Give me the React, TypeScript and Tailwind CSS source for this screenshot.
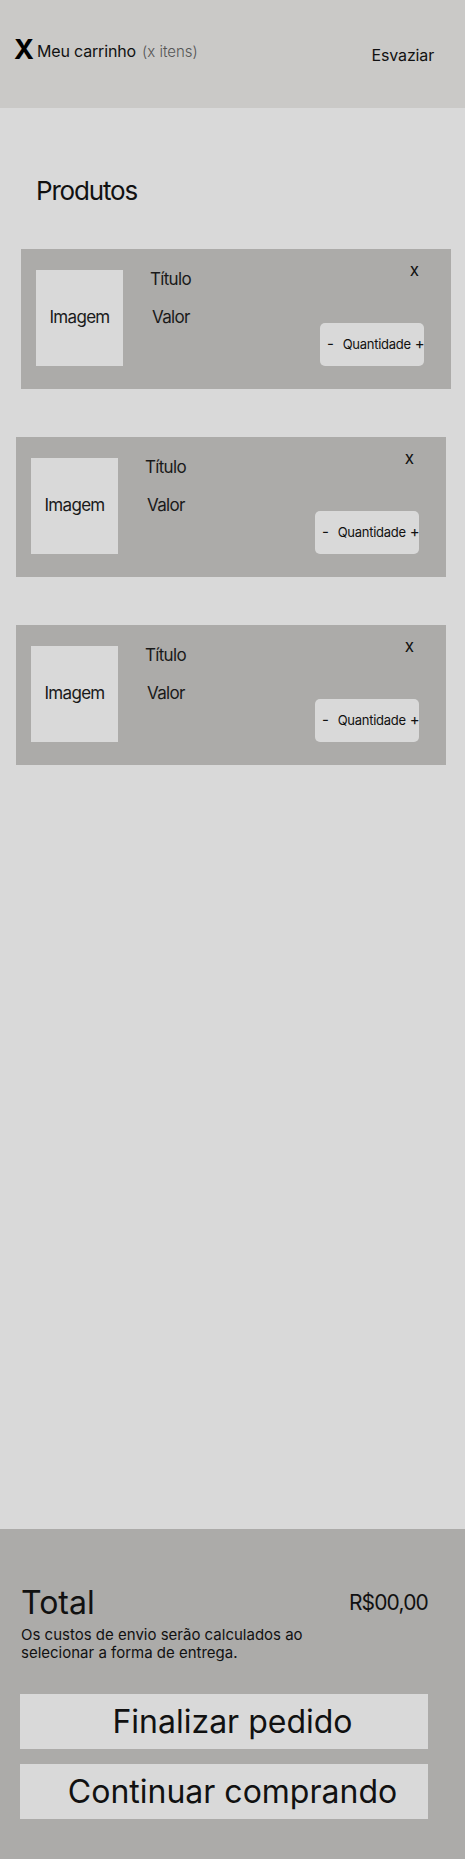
import React from "react";

const font = { fontFamily: "Inter, 'Noto Sans', sans-serif" };

function CartItem({ shift }: { shift: string }) {
  return (
    <div className={`${shift} w-[430px] h-[140px] bg-[#acaba9] flex pl-[15px] pt-[21px] pr-[27px]`}>
      {/* Image placeholder */}
      <div className="w-[87px] h-[96px] bg-[#d9d9d9] flex items-center justify-center text-[17px] tracking-[-0.04em] text-[#1a1a1a]">
        Imagem
      </div>

      {/* Title & price */}
      <div className="ml-[27px] -mt-[2px] flex flex-col text-[17px] tracking-[-0.04em] leading-[22px] text-[#1a1a1a]">
        <span>Título</span>
        <span className="mt-[16px] ml-[2px]">Valor</span>
      </div>

      {/* Remove + quantity */}
      <div className="ml-auto -mt-[11px] flex flex-col items-end">
        <span className="mr-[5px] text-[17px] leading-[22px] text-[#111]">x</span>
        <div className="mt-[42px] w-[104px] h-[43px] rounded-[5px] bg-[#d9d9d9] flex items-center pl-[7px] text-[13px] tracking-[-0.02em] text-[#111]">
          <span className="text-[15px]">-</span>
          <span className="ml-[9px]">Quantidade</span>
          <span className="ml-[4px] text-[15px] tracking-normal">+</span>
        </div>
      </div>
    </div>
  );
}

export default function App() {
  return (
    <div style={font} className="w-[465px] min-h-[1859px] bg-[#d9d9d9] flex flex-col">
      {/* Header */}
      <div className="h-[108px] bg-[#cac9c7] flex items-start pl-[14px] pr-[31px]">
        <span className="mt-[36px] text-[27px] font-bold leading-none text-black">X</span>
        <div className="mt-[41px] ml-[3px] flex items-baseline leading-[20px]">
          <span className="text-[16px] tracking-[-0.01em] text-[#111]">Meu carrinho</span>
          <span className="ml-[6px] text-[15px] font-light text-[#555]">(x itens)</span>
        </div>
        <span className="ml-auto mt-[45px] text-[16px] leading-[20px] tracking-[-0.01em] text-[#111]">Esvaziar</span>
      </div>

      {/* Products */}
      <div className="h-[1421px]">
        <div className="h-[141px] pl-[36px] pt-[70px]">
          <h2 className="text-[26px] leading-none tracking-[-0.045em] text-[#111]">Produtos</h2>
        </div>
        <div className="flex flex-col gap-[48px]">
          <CartItem shift="ml-[21px]" />
          <CartItem shift="ml-[16px]" />
          <CartItem shift="ml-[16px]" />
        </div>
      </div>

      {/* Summary */}
      <div className="h-[330px] bg-[#acaba9] pl-[20px] pt-[58px]">
        <div className="w-[408px]">
          <div className="flex items-start justify-between">
            <span className="pl-[1px] text-[32px] leading-none text-[#111]">Total</span>
            <span className="mt-[5px] text-[21px] leading-none tracking-[-0.04em] text-[#111]">R$00,00</span>
          </div>
          <p className="mt-[7px] pl-[1px] w-[320px] text-[15px] leading-[18px] text-[#111]">
            Os custos de envio serão calculados ao selecionar a forma de entrega.
          </p>
          <div className="mt-[32px] flex flex-col gap-[15px]">
            <button className="h-[55px] bg-[#d9d9d9] pl-[17px] text-[32px] text-[#111]">
              Finalizar pedido
            </button>
            <button className="h-[55px] bg-[#d9d9d9] pl-[17px] text-[32px] text-[#111]">
              Continuar comprando
            </button>
          </div>
        </div>
      </div>
    </div>
  );
}
